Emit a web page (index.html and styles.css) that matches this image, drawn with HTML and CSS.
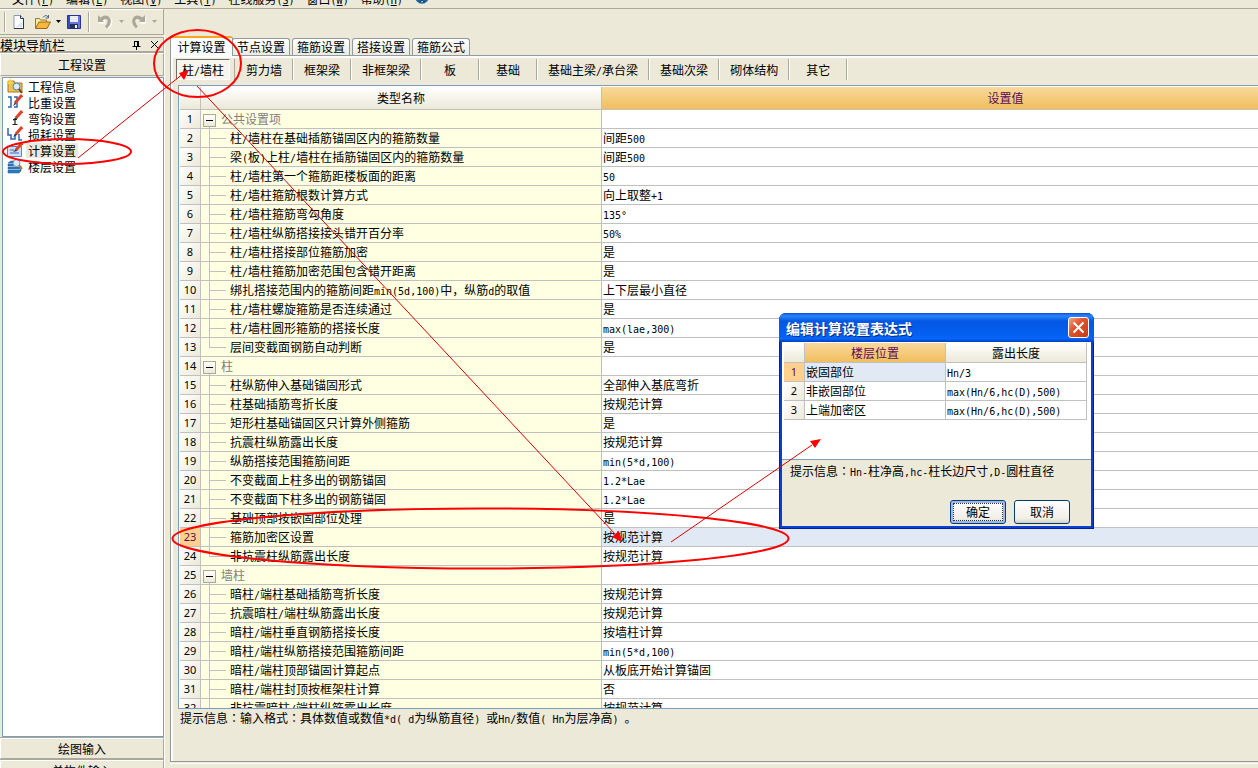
FILE: index.html
```html
<!DOCTYPE html>
<html lang="zh-CN">
<head>
<meta charset="utf-8">
<title>计算设置</title>
<link rel="stylesheet" href="styles.css">
</head>
<body>
<div class="app">
  <nav class="menubar">
    <a href="#">文件<span class="m">(<u>F</u>)</span></a>
    <a href="#">编辑<span class="m">(<u>E</u>)</span></a>
    <a href="#">视图<span class="m">(<u>V</u>)</span></a>
    <a href="#">工具<span class="m">(<u>T</u>)</span></a>
    <a href="#">在线服务<span class="m">(<u>S</u>)</span></a>
    <a href="#">窗口<span class="m">(<u>W</u>)</span></a>
    <a href="#">帮助<span class="m">(<u>H</u>)</span></a>
    <svg class="globe" width="14" height="14" viewBox="0 0 14 14"><circle cx="7" cy="7" r="6" fill="#bfe0f5" stroke="#1f6296" stroke-width="1.5"/><path d="M3 9l2 3 2-3 2 3 2-3" fill="none" stroke="#124a86" stroke-width="1.4"/></svg>
  </nav>
  <div class="toolbar">
    <span class="grip"></span>
    <button class="tool" aria-label="新建"><svg width="16" height="16" viewBox="0 0 16 16"><path d="M3 1.500h6.500l3 3V14.500H3z" fill="#fff" stroke="#7f9db9"/><path d="M9.500 1.500v3h3M12.500 4.500v10H3" fill="none" stroke="#26364d"/><path d="M4.500 13h7V7z" fill="#dbe7f7"/></svg></button>
    <button class="tool open" aria-label="打开"><svg width="18" height="16" viewBox="0 0 18 16"><path d="M1.500 14V4.500h4l1 1.500h6v2" fill="#ffe9a0" stroke="#a87617"/><path d="M1.500 14.500L5 8h11.500l-3.500 6.500z" fill="#f5b83d" stroke="#9a6a12"/><path d="M9 3.500q3-4 5.500 0M14.500 1v3h-3" fill="none" stroke="#49698e"/></svg></button>
    <button class="drop" aria-label="打开选项"><svg width="7" height="4"><path d="M1 0h5L3.500 3z" fill="#000"/></svg></button>
    <button class="tool" aria-label="保存"><svg width="16" height="16" viewBox="0 0 16 16"><path d="M1.500 1.500h13v13h-13z" fill="#6a78dc" stroke="#27329d"/><path d="M4 2h8v6H4z" fill="#e9edf8"/><path d="M4 10h8v4.500H4z" fill="#24305f"/><path d="M9 11h2v3H9z" fill="#fff"/><path d="M2 2h2v12H2z" fill="#3d4bc4"/></svg></button>
    <span class="sep"></span>
    <button class="tool undo" aria-label="撤销" disabled><svg width="16" height="16" viewBox="0 0 16 16"><path d="M2 2v5h5M4 6q3-3.500 6-2.500 4 1.500 2.500 5.500-1 2-3 3.500" fill="none" stroke="#fff" stroke-width="3" transform="translate(1 1)"/><path d="M1 1v7h6L5.500 6.500q3-2 4.500-1 2 2-2 7l2 2Q15 10 13.500 5 10-1 3.500 3.500z" fill="#aca899"/></svg></button>
    <button class="drop" aria-label="撤销选项" disabled><svg width="7" height="4"><path d="M1 0h5L3.500 3z" fill="#aca899"/></svg></button>
    <button class="tool redo" aria-label="重做" disabled><svg width="16" height="16" viewBox="0 0 16 16"><path d="M14 2v5H9M12 6Q9 2.500 6 3.500 2 5 3.500 9q1 2 3 3.500" fill="none" stroke="#fff" stroke-width="3" transform="translate(1 1)"/><path d="M15 1v7H9l1.500-1.500q-3-2-4.500-1-2 2 2 7l-2 2Q1 10 2.500 5 6-1 12.500 3.500z" fill="#aca899"/></svg></button>
    <button class="drop" aria-label="重做选项" disabled><svg width="7" height="4"><path d="M1 0h5L3.500 3z" fill="#aca899"/></svg></button>
  </div>
  <div class="body">
    <aside class="nav">
      <header class="nav-head"><h2>模块导航栏</h2>
        <button aria-label="固定"><svg width="9" height="10" viewBox="0 0 9 10"><path d="M2.500 1v5M2 1.500h4M5.500 1v5M6.500 1v5M0.500 6.500h8M4.500 7v3" stroke="#000" fill="none"/></svg></button>
        <button aria-label="关闭"><svg width="9" height="9" viewBox="0 0 9 9"><path d="M1 1l7 7M8 1L1 8" stroke="#000" fill="none"/></svg></button>
      </header>
      <button class="section">工程设置</button>
      <ul class="nav-list">
        <li><a href="#"><svg viewBox="0 0 16 16"><path d="M1 3h6l1 2h7v9H1z" fill="#efc254" stroke="#a87a25"/><path d="M0 4h6M3 0v7M1 2l4 4M5 2L1 6" stroke="#ffd83b"/><circle cx="9.500" cy="8.500" r="3.500" fill="#dcecfb" stroke="#4a7db5"/><path d="M12 11l3 4" stroke="#6b4722" stroke-width="2"/></svg><span>工程信息</span></a></li>
        <li><a href="#"><svg viewBox="0 0 16 16"><path d="M1 3h3v10H1M7 3h3v10H7" fill="none" stroke="#2f66b0" stroke-width="1.500"/><path d="M15 1L8 9" stroke="#e0442c" stroke-width="3"/><path d="M8 8l-2 4 3-2" fill="#333"/></svg><span>比重设置</span></a></li>
        <li><a href="#"><svg viewBox="0 0 16 16"><path d="M15 1L9 8" stroke="#e0442c" stroke-width="3"/><path d="M9 7l-3 4 4-2z" fill="#333"/><path d="M8 8v7M6 9.500h4M5.500 14.500h5" stroke="#222" stroke-width="1.200"/></svg><span>弯钩设置</span></a></li>
        <li><a href="#"><svg viewBox="0 0 16 16"><path d="M1 2v7h3v4h4V8M12 8v6h3" fill="none" stroke="#2f66b0" stroke-width="1.500"/><path d="M15 1L9 8" stroke="#e0442c" stroke-width="3"/><path d="M9 7l-3 4 4-2z" fill="#333"/></svg><span>损耗设置</span></a></li>
        <li><a href="#" class="current"><svg viewBox="0 0 16 16"><path d="M.5 4.500h14v10H.5z" fill="#cfe0f6" stroke="#5b86c4"/><path d="M3 8h4M3 11h9" stroke="#3d6db4"/><path d="M15 1L9 8" stroke="#e0442c" stroke-width="3"/><path d="M9 7l-3 3 4-1z" fill="#333"/></svg><span>计算设置</span></a></li>
        <li><a href="#"><svg viewBox="0 0 16 16"><path d="M1 5l3-2h8l-2 2zM1 6h10v2H1zM1 9h11l2-1v2l-2 1H1zM1 12h11l2-1v2l-2 2H1z" fill="#2b7cc4" stroke="#1b568f" stroke-width=".5"/><circle cx="9.500" cy="5" r="3.500" fill="#d9ebfa" stroke="#7393b5"/><path d="M12 7l3 4" stroke="#b5793a" stroke-width="2"/></svg><span>楼层设置</span></a></li>
      </ul>
      <button class="section low">绘图输入</button>
      <button class="section low">单构件输入</button>
    </aside>
    <main class="main">
      <div class="tabs" role="tablist">
        <button role="tab" aria-selected="true" class="tab on">计算设置</button>
        <button role="tab" class="tab">节点设置</button>
        <button role="tab" class="tab">箍筋设置</button>
        <button role="tab" class="tab">搭接设置</button>
        <button role="tab" class="tab">箍筋公式</button>
      </div>
      <section class="page">
        <div class="kinds">
          <button class="kind on">柱<span class="m">/</span>墙柱</button>
          <button class="kind">剪力墙</button>
          <button class="kind">框架梁</button>
          <button class="kind">非框架梁</button>
          <button class="kind">板</button>
          <button class="kind">基础</button>
          <button class="kind">基础主梁<span class="m">/</span>承台梁</button>
          <button class="kind">基础次梁</button>
          <button class="kind">砌体结构</button>
          <button class="kind">其它</button>
        </div>
        <div class="grid-box">
          <table class="grid">
            <colgroup><col class="c-num"><col class="c-name"><col></colgroup>
            <thead><tr><th></th><th>类型名称</th><th class="hot">设置值</th></tr></thead>
            <tbody>
              <tr class="group"><th>1</th><td><button aria-label="折叠"></button>公共设置项</td><td></td></tr>
              <tr><th>2</th><td>柱<span class="m">/</span>墙柱在基础插筋锚固区内的箍筋数量</td><td>间距<span class="m">500</span></td></tr>
              <tr><th>3</th><td>梁<span class="m">(</span>板<span class="m">)</span>上柱<span class="m">/</span>墙柱在插筋锚固区内的箍筋数量</td><td>间距<span class="m">500</span></td></tr>
              <tr><th>4</th><td>柱<span class="m">/</span>墙柱第一个箍筋距楼板面的距离</td><td><span class="m">50</span></td></tr>
              <tr><th>5</th><td>柱<span class="m">/</span>墙柱箍筋根数计算方式</td><td>向上取整<span class="m">+1</span></td></tr>
              <tr><th>6</th><td>柱<span class="m">/</span>墙柱箍筋弯勾角度</td><td><span class="m">135°</span></td></tr>
              <tr><th>7</th><td>柱<span class="m">/</span>墙柱纵筋搭接接头错开百分率</td><td><span class="m">50%</span></td></tr>
              <tr><th>8</th><td>柱<span class="m">/</span>墙柱搭接部位箍筋加密</td><td>是</td></tr>
              <tr><th>9</th><td>柱<span class="m">/</span>墙柱箍筋加密范围包含错开距离</td><td>是</td></tr>
              <tr><th>10</th><td>绑扎搭接范围内的箍筋间距<span class="m">min(5d,100)</span>中，纵筋<span class="m">d</span>的取值</td><td>上下层最小直径</td></tr>
              <tr><th>11</th><td>柱<span class="m">/</span>墙柱螺旋箍筋是否连续通过</td><td>是</td></tr>
              <tr><th>12</th><td>柱<span class="m">/</span>墙柱圆形箍筋的搭接长度</td><td><span class="m">max(lae,300)</span></td></tr>
              <tr class="last"><th>13</th><td>层间变截面钢筋自动判断</td><td>是</td></tr>
              <tr class="group"><th>14</th><td><button aria-label="折叠"></button>柱</td><td></td></tr>
              <tr><th>15</th><td>柱纵筋伸入基础锚固形式</td><td>全部伸入基底弯折</td></tr>
              <tr><th>16</th><td>柱基础插筋弯折长度</td><td>按规范计算</td></tr>
              <tr><th>17</th><td>矩形柱基础锚固区只计算外侧箍筋</td><td>是</td></tr>
              <tr><th>18</th><td>抗震柱纵筋露出长度</td><td>按规范计算</td></tr>
              <tr><th>19</th><td>纵筋搭接范围箍筋间距</td><td><span class="m">min(5*d,100)</span></td></tr>
              <tr><th>20</th><td>不变截面上柱多出的钢筋锚固</td><td><span class="m">1.2*Lae</span></td></tr>
              <tr><th>21</th><td>不变截面下柱多出的钢筋锚固</td><td><span class="m">1.2*Lae</span></td></tr>
              <tr><th>22</th><td>基础顶部按嵌固部位处理</td><td>是</td></tr>
              <tr class="picked"><th>23</th><td>箍筋加密区设置</td><td>按规范计算</td></tr>
              <tr class="last"><th>24</th><td>非抗震柱纵筋露出长度</td><td>按规范计算</td></tr>
              <tr class="group"><th>25</th><td><button aria-label="折叠"></button>墙柱</td><td></td></tr>
              <tr><th>26</th><td>暗柱<span class="m">/</span>端柱基础插筋弯折长度</td><td>按规范计算</td></tr>
              <tr><th>27</th><td>抗震暗柱<span class="m">/</span>端柱纵筋露出长度</td><td>按规范计算</td></tr>
              <tr><th>28</th><td>暗柱<span class="m">/</span>端柱垂直钢筋搭接长度</td><td>按墙柱计算</td></tr>
              <tr><th>29</th><td>暗柱<span class="m">/</span>端柱纵筋搭接范围箍筋间距</td><td><span class="m">min(5*d,100)</span></td></tr>
              <tr><th>30</th><td>暗柱<span class="m">/</span>端柱顶部锚固计算起点</td><td>从板底开始计算锚固</td></tr>
              <tr><th>31</th><td>暗柱<span class="m">/</span>端柱封顶按框架柱计算</td><td>否</td></tr>
              <tr><th>32</th><td>非抗震暗柱<span class="m">/</span>端柱纵筋露出长度</td><td>按规范计算</td></tr>
            </tbody>
          </table>
        </div>
        <p class="tip">提示信息<span class="mid" lang="zh-TW">：</span>输入格式<span class="mid" lang="zh-TW">：</span>具体数值或数值<span class="m">*d( d</span>为纵筋直径<span class="m">) </span>或<span class="m">Hn/</span>数值<span class="m">( Hn</span>为层净高<span class="m">) </span>。</p>
      </section>
      <div class="foot"></div>
    </main>
  </div>

  <section class="dialog" role="dialog" aria-labelledby="dlg-title">
    <header class="dlg-bar"><h1 id="dlg-title">编辑计算设置表达式</h1>
      <button class="dlg-close" aria-label="关闭"><svg width="13" height="13" viewBox="0 0 13 13"><path d="M1.500 1.500l10 10M11.500 1.500l-10 10" stroke="#fff" stroke-width="2"/></svg></button>
    </header>
    <div class="dlg-body">
      <div class="dlg-grid">
        <table class="grid small">
          <colgroup><col class="c-num"><col><col></colgroup>
          <thead><tr><th></th><th class="hot">楼层位置</th><th>露出长度</th></tr></thead>
          <tbody>
            <tr class="picked"><th>1</th><td>嵌固部位</td><td><span class="m">Hn/3</span></td></tr>
            <tr><th>2</th><td>非嵌固部位</td><td><span class="m">max(Hn/6,hc(D),500)</span></td></tr>
            <tr><th>3</th><td>上端加密区</td><td><span class="m">max(Hn/6,hc(D),500)</span></td></tr>
          </tbody>
        </table>
      </div>
      <p class="dlg-tip">提示信息<span class="mid" lang="zh-TW">：</span><span class="m">Hn-</span>柱净高<span class="m">,hc-</span>柱长边尺寸<span class="m">,D-</span>圆柱直径</p>
      <div class="dlg-actions"><button class="btn default">确定</button><button class="btn">取消</button></div>
    </div>
  </section>

  <svg class="marks" width="840" height="600" viewBox="0 0 840 600" aria-hidden="true">
    <g fill="none" stroke="#f00" stroke-width="2">
      <ellipse cx="197.500" cy="63.500" rx="43.500" ry="33.500"/>
      <ellipse cx="67" cy="151.500" rx="64" ry="12.500"/>
      <ellipse cx="480.500" cy="538.500" rx="308" ry="30"/>
    </g>
    <g stroke="#d00" stroke-width="1"><path d="M78 158L184 73M197 86L616 535M671 542L812 445" fill="none"/></g>
    <g fill="#f00"><path d="M189 70l-10 3 5 7zM622 542l-10-5 7-6zM821 439l-11 2 5 7z"/></g>
  </svg>
</div>
</body>
</html>
```
FILE: styles.css
```css
* { box-sizing: border-box; }
body { margin: 0; font: 12px/18px "Noto Sans CJK SC", sans-serif; color: #000; background: #ece9d8; }
button { font: inherit; color: inherit; padding: 0; margin: 0; border: 0; background: none; }
a { color: inherit; text-decoration: none; }
h1, h2, p, ul { margin: 0; padding: 0; }
svg { display: block; }
.m { font-family: "DejaVu Sans Mono", monospace; font-size: 10px; line-height: 1; white-space: pre; }
.mid { font-family: "Noto Sans CJK TC", sans-serif; line-height: 1; }

.app { position: relative; height: 100vh; display: flex; flex-direction: column; overflow: hidden; }

.menubar { height: 9px; flex: none; display: flex; align-items: flex-end; gap: 12px; padding-left: 12px; overflow: hidden; border-bottom: 1px solid #aca899; white-space: nowrap; }
.menubar a { line-height: 18px; }
.globe { flex: none; margin-bottom: 4px; }

.toolbar { width: 164px; height: 26px; flex: none; display: flex; align-items: center; border: solid #aca899; border-width: 0 1px 1px 0; box-shadow: inset 0 1px #fff; }
.grip { width: 2px; height: 20px; margin: 0 4px; background: #aca899; border-right: 1px solid #fff; }
.tool { width: 18px; display: flex; justify-content: center; }
.tool.open { margin-left: 6px; }
.tool.undo, .tool.redo { width: 20px; }
.drop { width: 13px; display: flex; justify-content: center; }
.sep { width: 2px; height: 20px; margin: 0 5px; background: #aca899; border-right: 1px solid #fff; }

.body { flex: 1; min-height: 0; display: flex; gap: 5px; }

.nav { width: 165px; flex: none; display: flex; flex-direction: column; padding-top: 2px; border-right: 1px solid #fff; overflow: hidden; }
.nav-head { height: 15px; flex: none; display: flex; align-items: center; gap: 9px; padding-right: 4px; border: 1px solid #aca899; border-left: 0; }
.nav-head h2 { flex: 1; font-size: 13px; font-weight: 400; line-height: 13px; }
.section { height: 23px; flex: none; margin-top: 1px; border: 1px solid #aca899; border-top-color: #fff; border-left-color: #fff; box-shadow: 0 -1px #aca899; }
.nav-list { flex: 1; min-height: 0; margin: 1px 0 0 2px; background: #fff; border: 1px solid #7f9db9; list-style: none; }
.nav-list a { display: flex; align-items: center; gap: 3px; height: 16px; padding-left: 4px; }
.nav-list svg { width: 16px; height: 16px; }
.nav-list span { line-height: 15px; padding: 0 2px; }
.nav-list .current span { background: #ece9d8; }
.section.low { height: 21px; margin-top: 1px; }
.nav-list ~ .section:last-child { margin-bottom: -13px; }

.main { flex: 1; min-width: 0; display: flex; flex-direction: column; padding-top: 1px; }
.tabs { height: 19px; flex: none; display: flex; align-items: flex-end; gap: 2px; }
.tab { width: 58px; height: 17px; line-height: 16px; background: linear-gradient(#fff, #ecebe0); border: 1px solid #919b9c; border-bottom: 0; border-radius: 3px 3px 0 0; white-space: nowrap; }
.tab.on { width: 63px; height: 20px; margin-right: -3px; margin-bottom: -1px; background: #fcfcfe; border-top: 2px solid #f5a623; position: relative; z-index: 1; }
.page { flex: 1; min-height: 0; display: flex; flex-direction: column; border: 1px solid #919b9c; border-right: 0; padding: 2px 0 0 7px; box-shadow: inset 2px 2px #fcfcfe; }
.kinds { height: 27px; flex: none; display: flex; align-items: flex-start; margin-left: -2px; padding-top: 1px; }
.kind { height: 21px; min-width: 58px; padding: 0 10px 0 11px; line-height: 18px; border-right: 1px solid #aca899; box-shadow: 1px 0 #fff; white-space: nowrap; }
.kind.on { min-width: 54px; padding: 0; margin-right: 4px; background: #f6f5ee; border: 1px solid #fff; border-top-color: #716f64; border-left-color: #716f64; box-shadow: none; }
.kind.on + .kind { min-width: 59px; border-left: 1px solid #aca899; }

.grid-box { flex: 1; min-height: 0; overflow: hidden; background: #fff; border: 1px solid #7f9db9; border-right: 0; padding: 1px 0 0 1px; }
.grid { width: 100%; table-layout: fixed; border-collapse: separate; border-spacing: 0; }
.c-num { width: 21px; }
.c-name { width: 401px; }
.grid th, .grid td { height: 19px; padding: 0 1px; line-height: 18px; font-weight: 400; text-align: left; white-space: nowrap; overflow: hidden; border: solid #c0c0c0; border-width: 0 1px 1px 0; }
.grid thead th { height: 23px; text-align: center; background: linear-gradient(#fff, #ece9d8); }
.grid thead .hot { background: linear-gradient(#f9d99c, #f1bd5e); color: #5c0a5c; }
.grid-box thead .hot { padding-left: 152px; }
.grid-box tr > :last-child { border-right: 0; }
.grid tbody th { padding: 0; text-align: center; font: 11px/18px "Noto Sans", sans-serif; background: linear-gradient(135deg, #fff, #ece9d8); }
.grid .picked th { background: #ffd18c; color: #5c0a5c; }
.grid-box tbody td:nth-child(2) {
  padding-left: 29px; background-color: #ffffe1; background-repeat: no-repeat;
  background-image: linear-gradient(#c0c0c0, #c0c0c0), linear-gradient(#c0c0c0, #c0c0c0);
  background-size: 1px 19px, 17px 1px; background-position: 8px 0, 8px 9px;
}
.grid-box .last td:nth-child(2) { background-size: 1px 9px, 17px 1px; }
.grid-box .group td:nth-child(2) { padding-left: 2px; color: #808080; background-size: 1px 4px, 0 0; background-position: 8px 15px, 0 0; }
.group button { width: 13px; height: 13px; margin-right: 5px; vertical-align: -2px; border: 1px solid #aca899; background: linear-gradient(#000, #000) center / 7px 1px no-repeat, linear-gradient(#fff, #ece9d8); }
.grid-box .picked td:nth-child(3), .small .picked td:nth-child(2) { background: #e1e9f5; }
.tip { height: 52px; flex: none; padding: 0 0 0 2px; }
.foot { height: 5px; flex: none; margin-top: 1px; border-top: 1px solid #fff; }

.dialog { position: absolute; left: 779px; top: 313px; width: 315px; background: #0a3fd0; border-radius: 7px 7px 0 0; padding: 0 3px 3px; box-shadow: inset 1px -1px #001ea0, inset -1px 0 #001ea0; }
.dlg-bar { height: 29px; margin: 0 -3px; padding: 0 5px 0 7px; display: flex; align-items: center; justify-content: space-between; border-radius: 7px 7px 0 0; background: linear-gradient(#0a50d8, #2a86fb 10%, #0457e2 28%, #0560f2 75%, #0566f8 88%, #0141c0); }
.dlg-bar h1 { color: #fff; font-size: 14px; line-height: 20px; text-shadow: 1px 1px #0a2a80; }
.dlg-close { width: 21px; height: 21px; display: flex; align-items: center; justify-content: center; border: 1px solid #fff; border-radius: 3px; background: linear-gradient(135deg, #f0a58c, #e2552f 40%, #c53a13); }
.dlg-body { background: #ece9d8; }
.dlg-grid { height: 118px; padding: 1px 4px 0 2px; background: #fff; border-bottom: 1px solid #7f9db9; }
.small thead th { height: 20px; }
.dlg-tip { padding: 2px 8px 0; }
.dlg-actions { display: flex; justify-content: flex-end; gap: 8px; padding: 20px 21px 2px; }
.btn { width: 56px; height: 24px; line-height: 20px; border: 1px solid #003c74; border-radius: 3px; background: linear-gradient(#fff, #f0eee6 80%, #d6d0c5); }
.btn.default { box-shadow: inset 0 0 0 2px #9db9eb; outline: 1px dotted #333; outline-offset: -4px; }

.marks { position: absolute; left: 0; top: 0; z-index: 5; pointer-events: none; }
```
